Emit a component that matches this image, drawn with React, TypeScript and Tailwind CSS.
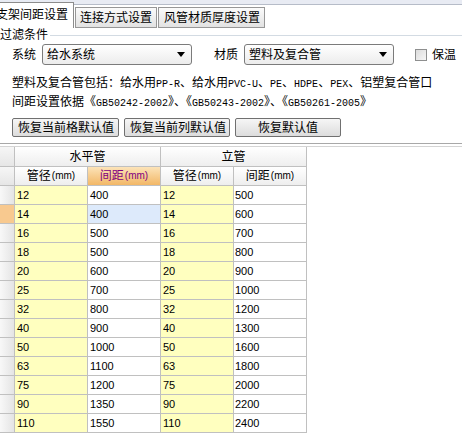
import React from 'react';

const rows: [number, number, number, number][] = [
  [12, 400, 12, 500],
  [14, 400, 14, 600],
  [16, 500, 16, 700],
  [18, 500, 18, 800],
  [20, 600, 20, 900],
  [25, 700, 25, 1000],
  [32, 800, 32, 1200],
  [40, 900, 40, 1300],
  [50, 1000, 50, 1600],
  [63, 1100, 63, 1800],
  [75, 1200, 75, 2000],
  [90, 1350, 90, 2200],
  [110, 1550, 110, 2400],
];

const cell = 'border-r border-b border-[#c0c0c0] h-[19px] flex items-center';
const hdr = 'bg-[linear-gradient(#ffffff,#eeeeee)]';

function Select({ value }: { value: string }) {
  return (
    <div className="w-[150px] h-[21px] border border-[#7b7b7b] rounded-[3px] bg-[linear-gradient(#ffffff,#ececec)] flex items-center pl-[4px] pr-[6px]">
      <span className="flex-1 leading-[14px]">{value}</span>
      <svg width="8" height="5" viewBox="0 0 8 5">
        <path d="M0 0h8L4 5z" fill="#000" />
      </svg>
    </div>
  );
}

function Btn({ label, w, center }: { label: string; w: string; center?: boolean }) {
  return (
    <button
      className={`${w} h-[19px] border border-[#707070] rounded-[2px] bg-[linear-gradient(#f6f6f6,#dcdcdc)] text-[12px] leading-[14px] flex items-center ${center ? 'justify-center' : 'justify-start pl-[5px]'}`}
    >
      {label}
    </button>
  );
}

function ColHead({ label, active }: { label: string; active?: boolean }) {
  return (
    <div
      className={`${cell} justify-center ${active ? 'bg-[linear-gradient(#fce3b8,#f2b766)] text-[#800080]' : hdr}`}
    >
      <span className="text-[12px] leading-[14px]">{label}</span>
      <span className="text-[10px] leading-[14px] ml-[1px]">(mm)</span>
    </div>
  );
}

// latin runs in a half-width mono face, like the bitmap font of the original
const M = ({ children }: { children: React.ReactNode }) => (
  <span className="font-['Liberation_Mono',monospace] text-[10px]">{children}</span>
);

export default function App() {
  return (
    <div className="w-[462px] h-[434px] overflow-hidden bg-white text-black text-[12px] font-['Liberation_Sans','Noto_Sans_CJK_SC',sans-serif]">
      {/* Tabs */}
      <div className="h-[28px] flex items-end bg-[linear-gradient(#e8ebf3_0,#e8ebf3_4px,#b6bcc8_4px,#b6bcc8_5px,#ffffff_5px)]">
        <div className="-ml-[7px] pl-[3px] pr-[5px] h-[26px] bg-white border-t border-r border-[#8c8c8c] flex items-start pt-[5px]">
          <span className="leading-[14px] text-[12px]">支架间距设置</span>
        </div>
        <div className="ml-[1px] h-[21px] px-[4px] border border-[#979797] bg-[linear-gradient(#fbfbfb,#e2e2e2)] flex items-center">
          <span className="leading-[14px]">连接方式设置</span>
        </div>
        <div className="ml-[1px] h-[21px] pl-[5px] pr-[4px] border border-[#979797] bg-[linear-gradient(#fbfbfb,#e2e2e2)] flex items-center">
          <span className="leading-[14px]">风管材质厚度设置</span>
        </div>
        <div className="flex-1" />
      </div>

      {/* Group title */}
      <div className="mt-[1px] h-[13px] flex items-center">
        <span className="leading-[13px]">过滤条件</span>
        <div className="flex-1 h-px bg-[#d3dbe3] ml-[2px]" />
      </div>

      {/* Filter row */}
      <div className="mt-[2px] h-[21px] flex items-center pl-[12px]">
        <span className="leading-[14px] w-[30px]">系统</span>
        <Select value="给水系统" />
        <span className="leading-[14px] ml-[22px] w-[30px]">材质</span>
        <Select value="塑料及复合管" />
        <div className="ml-[21px] w-[12px] h-[12px] border border-[#8e8f8f] bg-[linear-gradient(135deg,#dcdcdc,#f6f6f6)]" />
        <span className="leading-[14px] ml-[5px]">保温</span>
      </div>

      {/* Info text */}
      <div className="mt-[11px] pl-[12px] h-[14px] leading-[14px] whitespace-nowrap">
        塑料及复合管包括：给水用<M>PP-R</M>、给水用<M>PVC-U</M>、<M>PE</M>、<M>HDPE</M>、<M>PEX</M>、铝塑复合管口
      </div>
      <div className="mt-[5px] pl-[12px] h-[14px] leading-[14px] whitespace-nowrap">
        间距设置依据《<M>GB50242-2002</M>》、《<M>GB50243-2002</M>》、《<M>GB50261-2005</M>》
      </div>

      {/* Buttons */}
      <div className="mt-[9px] pl-[12px] flex gap-[5px]">
        <Btn label="恢复当前格默认值" w="w-[107px]" />
        <Btn label="恢复当前列默认值" w="w-[106px]" />
        <Btn label="恢复默认值" w="w-[106px]" center />
      </div>

      {/* Separator */}
      <div className="mt-[6px] h-[4px] border-t border-b border-t-[#a8a8a8] border-b-[#d4d4d4]" />

      {/* Grid */}
      <div className="grid grid-cols-[15px_73px_73px_73px_73px] w-[307px] text-[11px]">
        <div className={`${cell} h-[20px] bg-[linear-gradient(#f6f6f6,#e6e6e6)]`} />
        <div className={`${cell} h-[20px] col-span-2 justify-center ${hdr}`}>
          <span className="text-[12px] leading-[14px]">水平管</span>
        </div>
        <div className={`${cell} h-[20px] col-span-2 justify-center ${hdr}`}>
          <span className="text-[12px] leading-[14px]">立管</span>
        </div>

        <div className={`${cell} bg-[linear-gradient(#f6f6f6,#e6e6e6)]`} />
        <ColHead label="管径" />
        <ColHead label="间距" active />
        <ColHead label="管径" />
        <ColHead label="间距" />

        {rows.map((r, i) => (
          <React.Fragment key={i}>
            <div
              className={`${cell} ${i === 1 ? 'bg-[#f8c98f]' : 'bg-[linear-gradient(90deg,#f8f8f8,#e4e4e4)]'}`}
            />
            <div className={`${cell} bg-[#ffffbf] pl-[2px]`}>{r[0]}</div>
            <div className={`${cell} ${i === 1 ? 'bg-[#ddeafb]' : 'bg-white'} pl-[2px]`}>{r[1]}</div>
            <div className={`${cell} bg-[#ffffbf] pl-[2px]`}>{r[2]}</div>
            <div className={`${cell} bg-white pl-[1px]`}>{r[3]}</div>
          </React.Fragment>
        ))}
      </div>
    </div>
  );
}
